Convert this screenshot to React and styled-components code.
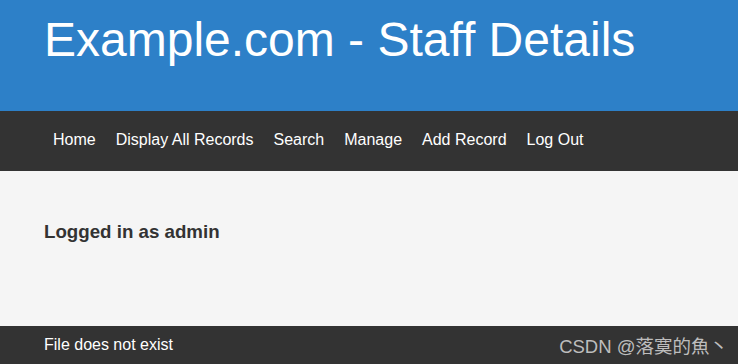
import React from "react";
import styled, { createGlobalStyle } from "styled-components";

const GlobalStyle = createGlobalStyle`
  html, body {
    margin: 0;
    padding: 0;
    background: #f5f5f5;
    font-family: "Liberation Sans", Arial, sans-serif;
  }
`;

const Page = styled.div`
  display: flex;
  flex-direction: column;
  width: 738px;
  height: 364px;
  overflow: hidden;
`;

const Header = styled.header`
  height: 111px;
  background: #2d80c8;
  padding: 14px 44px 0;
  box-sizing: border-box;
`;

const Title = styled.h1`
  margin: 0;
  color: #fff;
  font-weight: normal;
  font-size: 48px;
  line-height: 52px;
`;

const Nav = styled.nav`
  height: 60px;
  background: #333;
  display: flex;
  align-items: center;
  padding: 0 43px;
`;

const NavLink = styled.a`
  color: #fff;
  font-size: 16px;
  line-height: 18px;
  padding: 0 10px 2px;
  text-decoration: none;
`;

const Main = styled.main`
  flex: 1;
  background: #f5f5f5;
  padding: 50px 44px 0;
`;

const Status = styled.h3`
  margin: 0;
  color: #333;
  font-size: 18.72px;
  font-weight: bold;
`;

const Footer = styled.footer`
  height: 38px;
  background: #333;
  display: flex;
  align-items: center;
  justify-content: space-between;
  padding: 0 10px 0 44px;
`;

const FooterText = styled.span`
  color: #fff;
  font-size: 16px;
`;

const Watermark = styled.span`
  color: #bdbdbd;
  font-size: 18.5px;
  font-family: "Liberation Sans", "Noto Sans CJK SC", sans-serif;
`;

const links = ["Home", "Display All Records", "Search", "Manage", "Add Record", "Log Out"];

export default function App() {
  return (
    <Page>
      <GlobalStyle />
      <Header>
        <Title>Example.com - Staff Details</Title>
      </Header>
      <Nav>
        {links.map((l) => (
          <NavLink key={l} href="#">
            {l}
          </NavLink>
        ))}
      </Nav>
      <Main>
        <Status>Logged in as admin</Status>
      </Main>
      <Footer>
        <FooterText>File does not exist</FooterText>
        <Watermark>CSDN @落寞的魚丶</Watermark>
      </Footer>
    </Page>
  );
}
